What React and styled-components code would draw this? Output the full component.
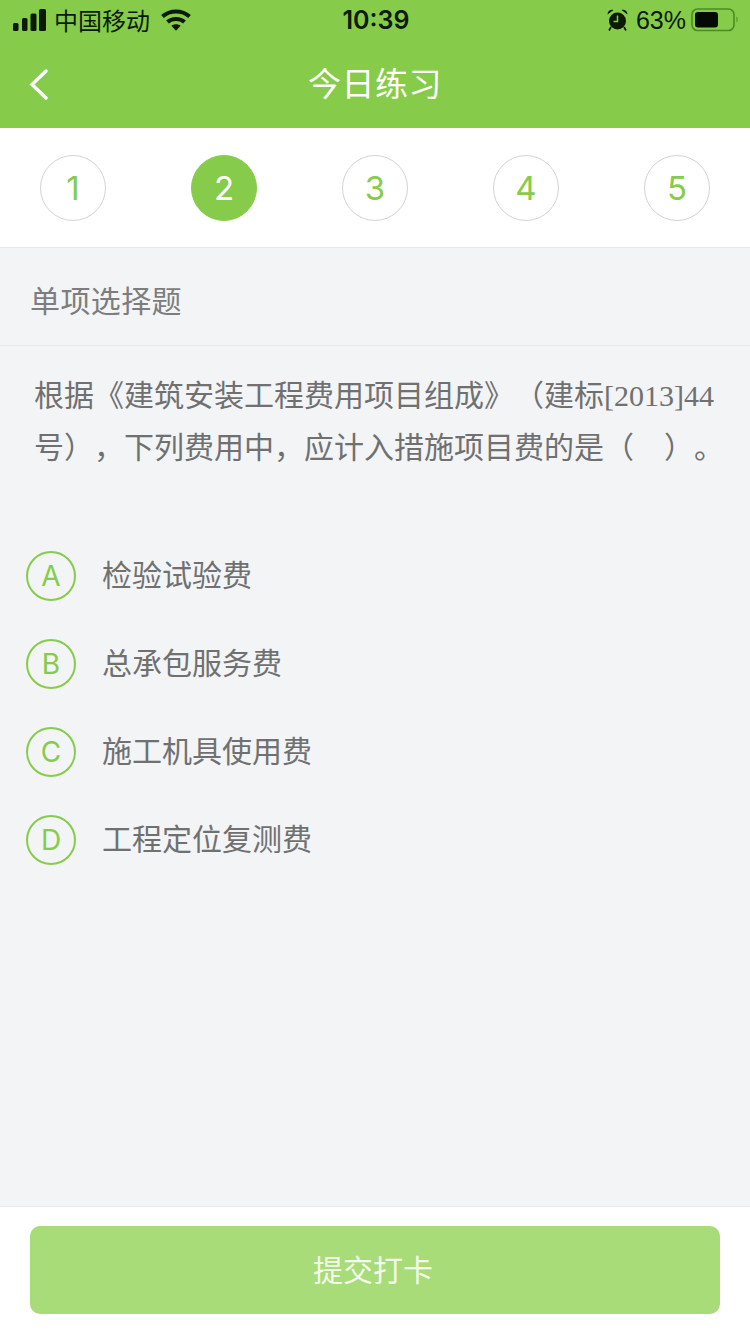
import React from 'react';
import styled, { createGlobalStyle } from 'styled-components';

const GlobalStyle = createGlobalStyle`
  html, body {
    margin: 0;
    padding: 0;
    background: #f2f4f6;
  }
  * {
    box-sizing: border-box;
  }
`;

const CJK = `"Noto Sans CJK SC", sans-serif`;
const GREEN = '#86cc4a';

const Page = styled.div`
  width: 750px;
  height: 1334px;
  display: flex;
  flex-direction: column;
  background: #f2f4f6;
  font-family: "Liberation Sans", ${CJK};
  text-spacing-trim: space-all;
  overflow: hidden;
`;

const Header = styled.header`
  background: ${GREEN};
  height: 128px;
  flex: none;
`;

const StatusBar = styled.div`
  height: 40px;
  padding: 0 11px 0 13px;
  display: flex;
  align-items: center;
  justify-content: space-between;
  color: #0c1a04;
`;

const StatusSide = styled.div`
  width: 280px;
  display: flex;
  align-items: center;
  justify-content: ${(p) => (p.$end ? 'flex-end' : 'flex-start')};
  gap: ${(p) => p.$gap || 0}px;
`;

const Carrier = styled.span`
  font-size: 24px;
  line-height: 40px;
  font-family: ${CJK};
  margin-right: 3px;
`;

const Time = styled.span`
  font-family: Inter, sans-serif;
  font-size: 25px;
  font-weight: 600;
  line-height: 40px;
`;

const Percent = styled.span`
  font-family: "Liberation Sans", sans-serif;
  font-size: 25px;
  line-height: 40px;
  margin-right: -3px;
`;

const NavBar = styled.div`
  position: relative;
  height: 88px;
  padding-bottom: 4px;
  display: flex;
  align-items: center;
  justify-content: center;
`;

const BackButton = styled.svg`
  position: absolute;
  left: 28px;
  top: 28px;
`;

const Title = styled.h1`
  margin: 0;
  color: #fff;
  font-size: 33px;
  font-weight: 400;
  letter-spacing: 0.5px;
  font-family: ${CJK};
`;

const Steps = styled.div`
  flex: none;
  height: 120px;
  padding: 0 40px;
  background: #fff;
  border-bottom: 1px solid #e6e8ea;
  display: flex;
  align-items: center;
  justify-content: space-between;
`;

const Step = styled.div`
  width: 66px;
  height: 66px;
  border-radius: 50%;
  border: 1px solid ${(p) => (p.$active ? GREEN : '#d3d3d3')};
  background: ${(p) => (p.$active ? GREEN : '#fff')};
  color: ${(p) => (p.$active ? '#fff' : GREEN)};
  font-family: Inter, sans-serif;
  font-weight: 400;
  font-size: 33px;
  display: flex;
  align-items: center;
  justify-content: center;
`;

const SectionLabel = styled.div`
  flex: none;
  height: 98px;
  padding: 4px 30px 0;
  border-bottom: 1px solid #e8eaec;
  display: flex;
  align-items: center;
  color: #7d7d7d;
  font-size: 30px;
  letter-spacing: 0.4px;
  font-family: ${CJK};
`;

const Question = styled.p`
  margin: 0;
  padding: 24px 0 0 34px;
  font-size: 30px;
  line-height: 52px;
  color: #707070;
  font-family: "Liberation Serif", ${CJK};
  white-space: pre;
`;

const Options = styled.ul`
  list-style: none;
  margin: 0;
  padding: 58px 0 0 26px;
  flex: 1;
`;

const Option = styled.li`
  height: 88px;
  display: flex;
  align-items: center;
  gap: 26px;
`;

const OptionBadge = styled.span`
  width: 50px;
  height: 50px;
  flex: none;
  border-radius: 50%;
  border: 2px solid ${GREEN};
  color: ${GREEN};
  font-family: Inter, sans-serif;
  font-weight: 400;
  font-size: 28px;
  display: flex;
  align-items: center;
  justify-content: center;
`;

const OptionText = styled.span`
  margin-top: -7px;
  color: #707070;
  font-size: 30px;
  font-family: ${CJK};
`;

const Footer = styled.footer`
  flex: none;
  height: 128px;
  padding: 19px 30px 0;
  background: #fff;
  border-top: 1px solid #e8eaec;
`;

const SubmitButton = styled.button`
  display: block;
  width: 100%;
  height: 88px;
  padding: 0 4px 4px 0;
  border: 0;
  border-radius: 10px;
  background: #a8dc78;
  color: #f4fbec;
  font-size: 30px;
  font-family: ${CJK};
`;

const SignalIcon = () => (
  <svg width="33" height="22" viewBox="0 0 33 22" fill="#0c1a04">
    <rect x="0" y="14" width="5.5" height="8" rx="1.5" />
    <rect x="9" y="9" width="5.5" height="13" rx="1.5" />
    <rect x="17.5" y="4.5" width="6" height="17.5" rx="1.5" />
    <rect x="26" y="0" width="7" height="22" rx="1.5" />
  </svg>
);

const WifiIcon = () => (
  <svg width="30" height="22" viewBox="0 0 30 22" fill="none" stroke="#0c1a04" strokeWidth="4.2">
    <path d="M1.5 7.5C9 0.8 21 0.8 28.5 7.5" />
    <path d="M6.5 13C11 9 19 9 23.5 13" />
    <path d="M15 21.8l-4.6-5c2.6-2 6.6-2 9.2 0z" fill="#0c1a04" stroke="none" />
  </svg>
);

const AlarmIcon = () => (
  <svg width="21" height="22" viewBox="0 0 21 22" fill="#0c1a04">
    <circle cx="10.5" cy="12" r="8.5" />
    <path d="M0.5 5.5C0.5 2 3.5 0 6.5 1zM20.5 5.5C20.5 2 17.5 0 14.5 1z" />
    <path d="M4 18l-2 3.5M17 18l2 3.5" stroke="#0c1a04" strokeWidth="1.6" />
    <path d="M10.5 6.5v6h-4" stroke={GREEN} strokeWidth="1.5" fill="none" />
  </svg>
);

const BatteryIcon = () => (
  <svg width="48" height="24" viewBox="0 0 48 24" fill="none">
    <rect x="1" y="1" width="42" height="21.5" rx="5.5" stroke="#4c8a25" strokeWidth="1.6" />
    <rect x="4" y="4" width="23" height="15.5" rx="3" fill="#050a02" />
    <path d="M45.5 8.5c1.4.6 1.4 5.4 0 6z" fill="#4c8a25" />
  </svg>
);

const steps = [1, 2, 3, 4, 5];

const options = [
  { key: 'A', text: '检验试验费' },
  { key: 'B', text: '总承包服务费' },
  { key: 'C', text: '施工机具使用费' },
  { key: 'D', text: '工程定位复测费' },
];

export default function App() {
  return (
    <Page>
      <GlobalStyle />
      <Header>
        <StatusBar>
          <StatusSide $gap={8}>
            <SignalIcon />
            <Carrier>中国移动</Carrier>
            <WifiIcon />
          </StatusSide>
          <Time>10:39</Time>
          <StatusSide $end $gap={8}>
            <AlarmIcon />
            <Percent>63%</Percent>
            <BatteryIcon />
          </StatusSide>
        </StatusBar>
        <NavBar>
          <BackButton width="20" height="32" viewBox="0 0 20 32" fill="none" stroke="#fff" strokeWidth="3.4" strokeLinecap="round">
            <path d="M18 3L4 16.5l14 13.5" />
          </BackButton>
          <Title>今日练习</Title>
        </NavBar>
      </Header>

      <Steps>
        {steps.map((n) => (
          <Step key={n} $active={n === 2}>{n}</Step>
        ))}
      </Steps>

      <SectionLabel>单项选择题</SectionLabel>

      <Question>
        {'根据《建筑安装工程费用项目组成》（建标[2013]44\n号），下列费用中，应计入措施项目费的是（\u3000）。'}
      </Question>

      <Options>
        {options.map((o) => (
          <Option key={o.key}>
            <OptionBadge>{o.key}</OptionBadge>
            <OptionText>{o.text}</OptionText>
          </Option>
        ))}
      </Options>

      <Footer>
        <SubmitButton>提交打卡</SubmitButton>
      </Footer>
    </Page>
  );
}
